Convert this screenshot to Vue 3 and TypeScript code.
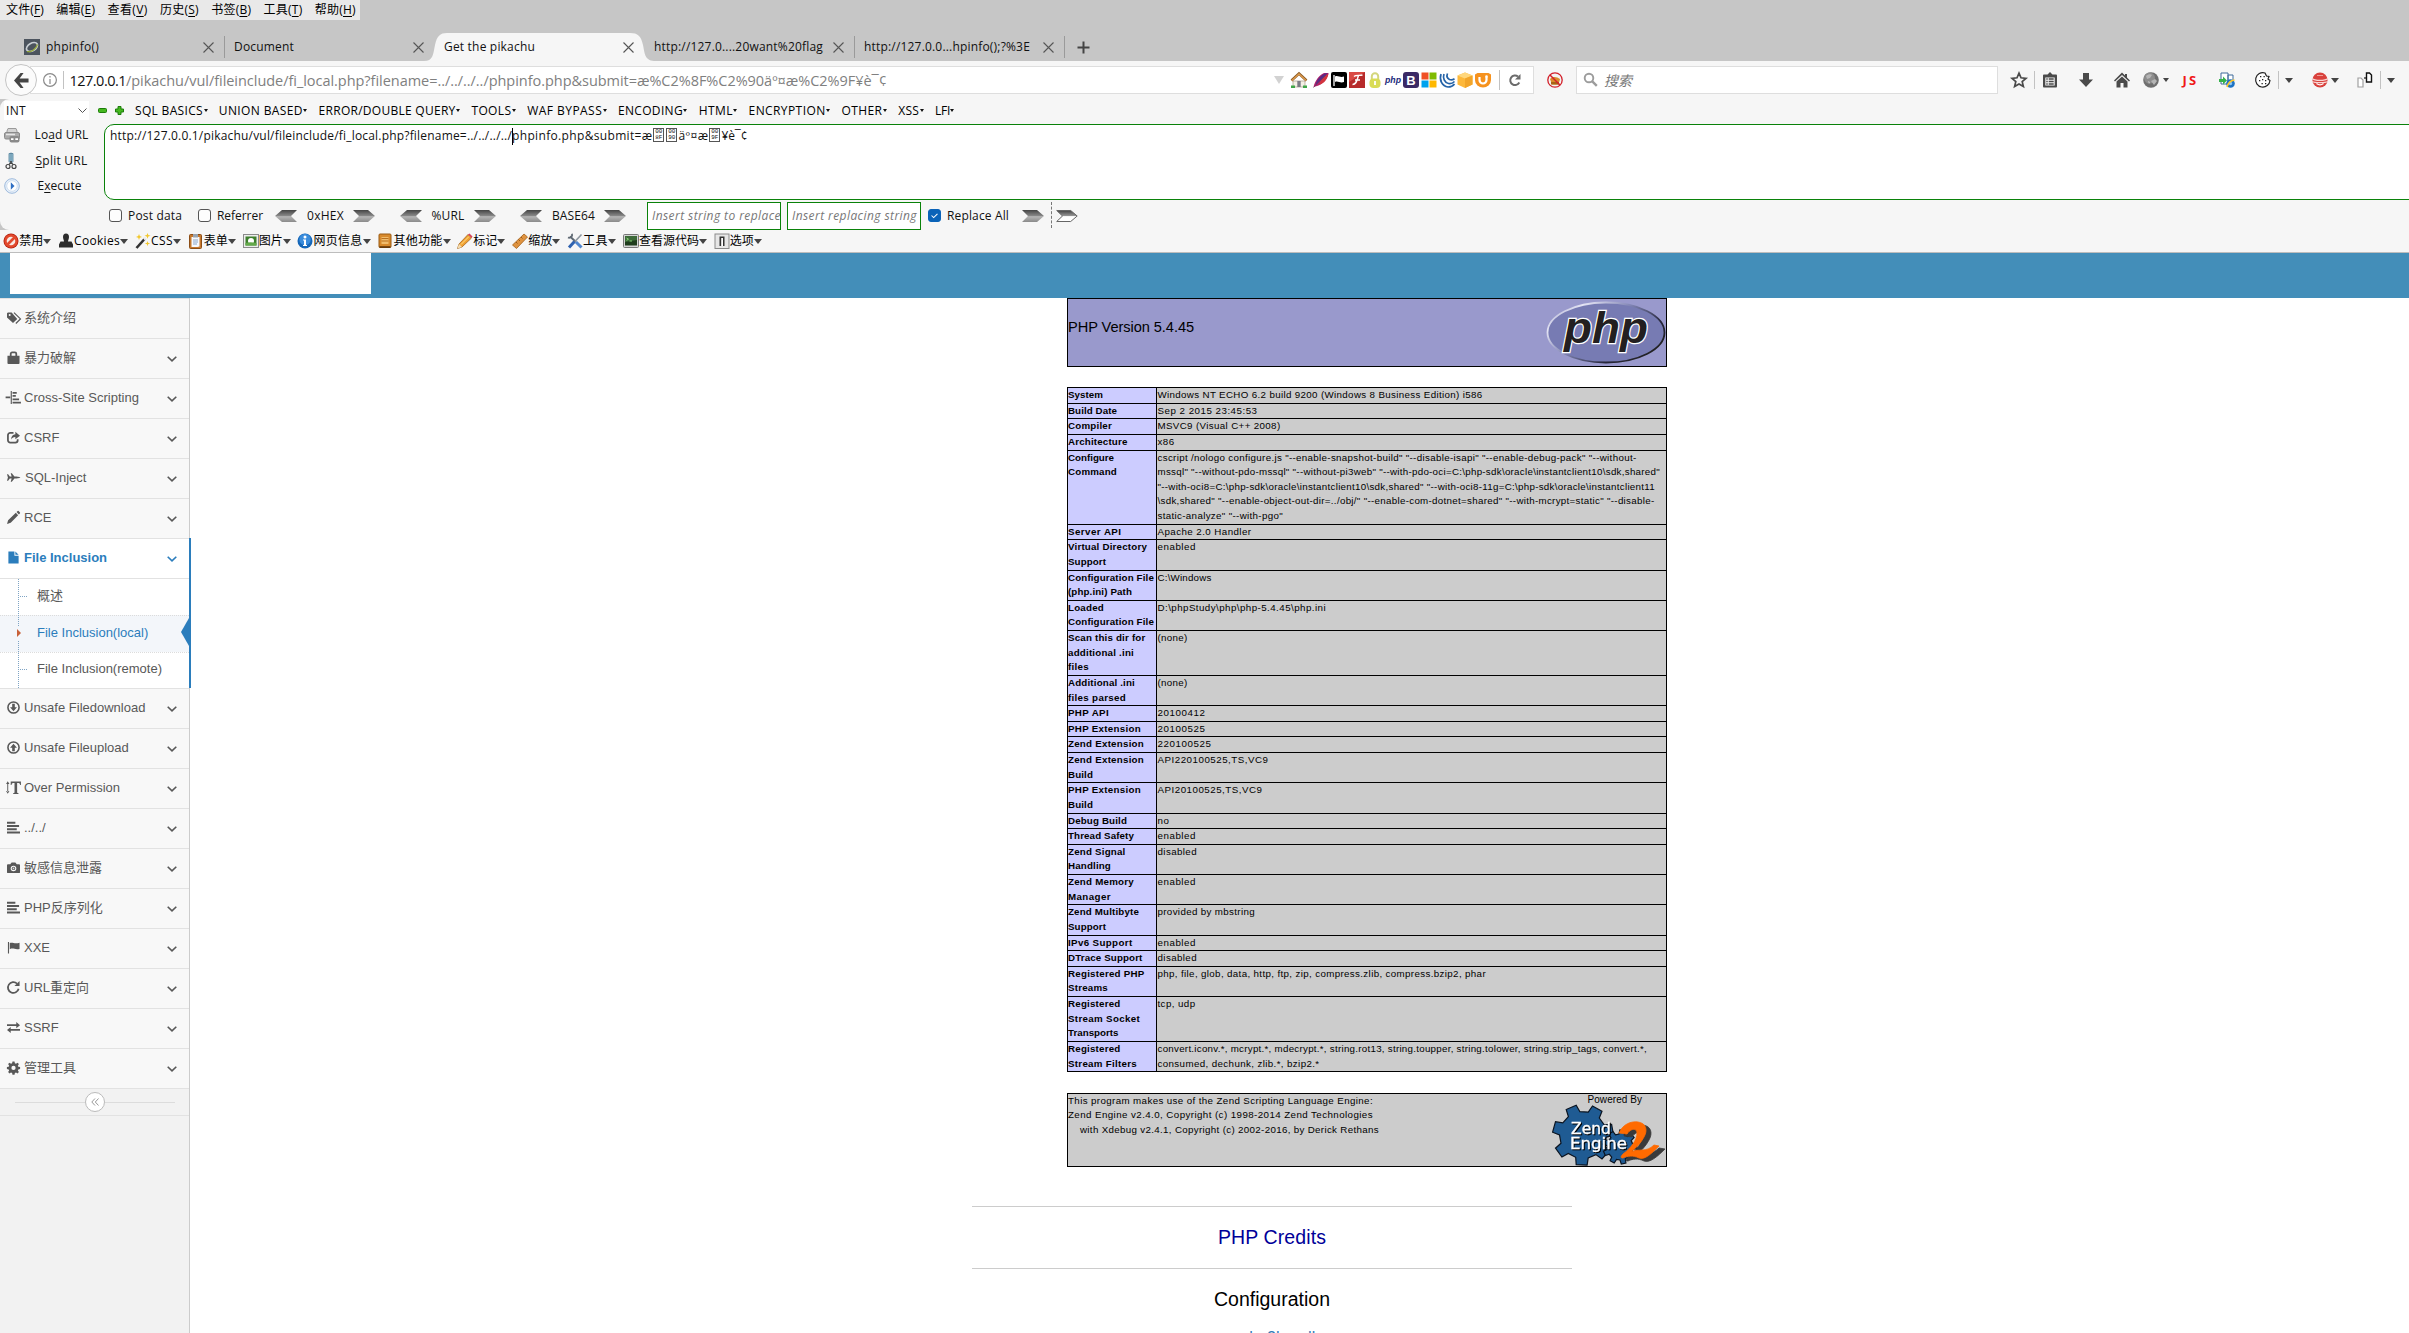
<script setup lang="ts">
import type { Directive } from 'vue'

// Tracks a run of text out to a given width in pixels.
const vFit: Directive<HTMLElement, number> = {
  mounted(el, { value }) {
    if (!value) return
    el.style.display = 'inline-block'
    el.style.whiteSpace = 'pre'
    const count = (el.textContent ?? '').length
    const natural = el.getBoundingClientRect().width
    el.style.letterSpacing = `${(value - natural) / count}px`
    el.style.width = `${value}px`
  },
}

interface Label { text: string; w: number }
interface Tool extends Label { icon: string }
interface NavItem { text: string; icon: string; active?: boolean }
interface InfoRow { label: Label[]; value: Label[] }

const t = (text: string, w = 0): Label => ({ text, w })

const menus = [
  { name: '文件', key: 'F', w: 38 }, { name: '编辑', key: 'E', w: 39 }, { name: '查看', key: 'V', w: 40 },
  { name: '历史', key: 'S', w: 39 }, { name: '书签', key: 'B', w: 40 }, { name: '工具', key: 'T', w: 39 },
  { name: '帮助', key: 'H', w: 41 },
]

const sqlMenus: Label[] = [
  t('SQL BASICS', 68), t('UNION BASED', 84), t('ERROR/DOUBLE QUERY', 137), t('TOOLS', 40), t('WAF BYPASS', 75),
  t('ENCODING', 65), t('HTML', 34), t('ENCRYPTION', 77), t('OTHER', 41), t('XSS', 21), t('LFI', 15),
]

const devTools: Tool[] = [
  { icon: 'ban', text: '禁用', w: 24 }, { icon: 'stamp', text: 'Cookies', w: 46 }, { icon: 'wand', text: 'CSS', w: 22 },
  { icon: 'form', text: '表单', w: 24 }, { icon: 'image', text: '图片', w: 24 }, { icon: 'info', text: '网页信息', w: 49 },
  { icon: 'book', text: '其他功能', w: 49 }, { icon: 'pencil', text: '标记', w: 24 }, { icon: 'ruler', text: '缩放', w: 24 },
  { icon: 'wrench', text: '工具', w: 25 }, { icon: 'term', text: '查看源代码', w: 60 }, { icon: 'switch', text: '选项', w: 24 },
]

const urlIcons = ['house', 'feather', 'flag', 'flash', 'lock', 'php', 'boot', 'win', 'jq', 'cube', 'ub']

const navTop: NavItem[] = [
  { text: '系统介绍', icon: 'tags' }, { text: '暴力破解', icon: 'bag' }, { text: 'Cross-Site Scripting', icon: 'alignv' },
  { text: 'CSRF', icon: 'share' }, { text: 'SQL-Inject', icon: 'plane' }, { text: 'RCE', icon: 'pen' },
  { text: 'File Inclusion', icon: 'file', active: true },
]
const subNav = ['概述', 'File Inclusion(local)', 'File Inclusion(remote)']
const navBottom: NavItem[] = [
  { text: 'Unsafe Filedownload', icon: 'down' }, { text: 'Unsafe Fileupload', icon: 'up' },
  { text: 'Over Permission', icon: 'textv' }, { text: '../../', icon: 'align' }, { text: '敏感信息泄露', icon: 'camera' },
  { text: 'PHP反序列化', icon: 'align' }, { text: 'XXE', icon: 'nflag' }, { text: 'URL重定向', icon: 'repeat' },
  { text: 'SSRF', icon: 'transfer' }, { text: '管理工具', icon: 'cog' },
]

const rows: InfoRow[] = [
  { label: [t('System', 35)], value: [t('Windows NT ECHO 6.2 build 9200 (Windows 8 Business Edition) i586', 325)] },
  { label: [t('Build Date', 49)], value: [t('Sep 2 2015 23:45:53', 100)] },
  { label: [t('Compiler', 44)], value: [t('MSVC9 (Visual C++ 2008)', 123)] },
  { label: [t('Architecture', 59.5)], value: [t('x86', 17)] },
  {
    label: [t('Configure', 46), t('Command', 49)],
    value: [
      t('cscript /nologo configure.js "--enable-snapshot-build" "--disable-isapi" "--enable-debug-pack" "--without-', 479),
      t('mssql" "--without-pdo-mssql" "--without-pi3web" "--with-pdo-oci=C:\\php-sdk\\oracle\\instantclient10\\sdk,shared"', 502.5),
      t('"--with-oci8=C:\\php-sdk\\oracle\\instantclient10\\sdk,shared" "--with-oci8-11g=C:\\php-sdk\\oracle\\instantclient11', 497.5),
      t('\\sdk,shared" "--enable-object-out-dir=../obj/" "--enable-com-dotnet=shared" "--with-mcrypt=static" "--disable-', 497),
      t('static-analyze" "--with-pgo"', 125.5),
    ],
  },
  { label: [t('Server API', 53.5)], value: [t('Apache 2.0 Handler', 94)] },
  { label: [t('Virtual Directory', 79), t('Support', 38)], value: [t('enabled', 38.5)] },
  { label: [t('Configuration File', 86), t('(php.ini) Path', 64)], value: [t('C:\\Windows', 54)] },
  { label: [t('Loaded', 36), t('Configuration File', 86)], value: [t('D:\\phpStudy\\php\\php-5.4.45\\php.ini', 168.5)] },
  { label: [t('Scan this dir for', 77.5), t('additional .ini', 66), t('files', 21)], value: [t('(none)', 30)] },
  { label: [t('Additional .ini', 67), t('files parsed', 58)], value: [t('(none)', 30)] },
  { label: [t('PHP API', 41)], value: [t('20100412', 48)] },
  { label: [t('PHP Extension', 73)], value: [t('20100525', 48)] },
  { label: [t('Zend Extension', 76)], value: [t('220100525', 54)] },
  { label: [t('Zend Extension', 76), t('Build', 25)], value: [t('API220100525,TS,VC9', 111)] },
  { label: [t('PHP Extension', 73), t('Build', 25)], value: [t('API20100525,TS,VC9', 105)] },
  { label: [t('Debug Build', 59)], value: [t('no', 12)] },
  { label: [t('Thread Safety', 66)], value: [t('enabled', 38.5)] },
  { label: [t('Zend Signal', 57.5), t('Handling', 43)], value: [t('disabled', 39.5)] },
  { label: [t('Zend Memory', 66), t('Manager', 43)], value: [t('enabled', 38.5)] },
  { label: [t('Zend Multibyte', 71), t('Support', 38)], value: [t('provided by mbstring', 97.5)] },
  { label: [t('IPv6 Support', 64.5)], value: [t('enabled', 38.5)] },
  { label: [t('DTrace Support', 74.5)], value: [t('disabled', 39.5)] },
  { label: [t('Registered PHP', 76.5), t('Streams', 40)], value: [t('php, file, glob, data, http, ftp, zip, compress.zlib, compress.bzip2, phar', 328.5)] },
  { label: [t('Registered', 52.5), t('Stream Socket', 72), t('Transports', 50.5)], value: [t('tcp, udp', 38)] },
  {
    label: [t('Registered', 52.5), t('Stream Filters', 69)],
    value: [
      t('convert.iconv.*, mcrypt.*, mdecrypt.*, string.rot13, string.toupper, string.tolower, string.strip_tags, convert.*,', 489.5),
      t('consumed, dechunk, zlib.*, bzip2.*', 162),
    ],
  },
]

// 16×16 coloured icons of the browser chrome.
const icons: Record<string, string> = {
  house: '<path d="M2 9h12v6H2z" fill="#f4f0e6" stroke="#9b8b74" stroke-width=".6"/><path d="M.5 8.500 8 1.500l7.500 7" fill="none" stroke="#8a5a26" stroke-width="2.6"/><path d="M.8 8.500 8 2l7.200 6.500" fill="none" stroke="#dd9a4c" stroke-width="1.300"/><path d="M6.300 9h3.400v6H6.300z" fill="#7b7b86"/><path d="M0 13.500h4V16H0zM12 13.500h4V16h-4z" fill="#3ea548"/>',
  feather: '<path d="M.5 15C2 9 6 3 11 1h4.500C15 6 10 12.500 4 14z" fill="#b3206b"/><path d="M3 11C5 6 9 2.500 12 1.500l3-.5C12 4 8 8 2.500 13z" fill="#5b2a85"/><path d="M7 10c2-3 5-6 8.500-8.500C14.500 7 11.500 11 6.500 12.800z" fill="#d2343e"/><path d="M.5 15.500 13 3" stroke="#6b3a66" stroke-width=".8"/>',
  flag: '<rect width="16" height="16" rx="2" fill="#000"/><path d="M3 3v11" stroke="#fff" stroke-width="1.300"/><path d="M4 4.500c3-1.500 5 1.500 9 0v5.500c-4 1.500-6-1.500-9 0z" fill="#fff"/>',
  flash: '<rect width="16" height="16" fill="#b72b2b"/><path d="M0 0h16L0 10z" fill="#d94a44"/><path d="M5 4.500c2-2 5-.5 8.500-1.500M9.500 3.500C8 8 7.500 12.500 3.500 12.500M6 8h5" stroke="#fff" stroke-width="1.400" fill="none"/>',
  lock: '<path d="M4.800 8V4.500a3.200 3.200 0 0 1 6.400 0V8" fill="none" stroke="#d3d67c" stroke-width="2"/><rect x="2.500" y="6.500" width="11" height="9.500" rx="4" fill="#d9dc56"/><path d="M8 9v4" stroke="#fff" stroke-width="1.800"/>',
  php: '<text x="8" y="10.500" text-anchor="middle" font-family="Liberation Sans, sans-serif" font-weight="bold" font-style="italic" font-size="9" textLength="16" lengthAdjust="spacingAndGlyphs" fill="#1b2a7b">php</text>',
  boot: '<rect width="16" height="16" rx="3" fill="#3b2a66"/><text x="8" y="12.800" text-anchor="middle" font-family="Liberation Sans, sans-serif" font-weight="bold" font-size="13" fill="#fff">B</text>',
  win: '<path d="M.5.500h7v7h-7z" fill="#f05125"/><path d="M8.500.500h7v7h-7z" fill="#7fbb00"/><path d="M.5 8.500h7v7h-7z" fill="#00a3ee"/><path d="M8.500 8.500h7v7h-7z" fill="#ffb800"/>',
  jq: '<path d="M2 2c-2 6 1 12 7 13 3 0 5-1 6.500-3M5 2C3.500 6 5.500 10.500 9.500 11.500c2.500.5 4.500-.5 6-2M8.500 1.500C7.500 4 8.500 6.500 10.500 7.500c2 .8 3.500.3 5-.7" fill="none" stroke="#2563a8" stroke-width="1.700"/>',
  cube: '<path d="m8 .5 7.500 3v9L8 16 .5 12.500v-9z" fill="#fdb83b"/><path d="m.5 3.500 7.500 3 7.500-3L8 .5z" fill="#ffd77c"/><path d="M8 6.500V16l7.500-3.500v-9z" fill="#f2a52a"/>',
  ub: '<path d="M0 2.500 2.500 1h11L16 2.500V8a8 7.500 0 0 1-16 0z" fill="#f6921e"/><path d="M4.500 5v3a3.500 3.500 0 0 0 7 0V5" fill="none" stroke="#fff" stroke-width="2.200"/><circle cx="11.500" cy="4.500" r="1.300" fill="#fff"/>',
  reload: '<path d="M12.300 10.500A4.800 4.800 0 1 1 11 4.500" fill="none" stroke="#6b6b6b" stroke-width="2"/><path d="M13.500 2V7.500H8z" fill="#6b6b6b"/>',
  noscript: '<circle cx="8" cy="8" r="7" fill="#f3f3f3"/><path d="M3 7c3-3 7-2 10 0l-1.500 5.500H5z" fill="#d98b2b"/><path d="M4 10h8v2.500H4z" fill="#a86414"/><circle cx="8" cy="8" r="7.200" fill="none" stroke="#d3202a" stroke-width="1.300"/><path d="m3 3 10 10" stroke="#d3202a" stroke-width="1.500"/>',
  search: '<circle cx="6" cy="6" r="4.300" fill="none" stroke="#9c9c9c" stroke-width="1.900"/><path d="m9.300 9.300 4.500 4.500" stroke="#9c9c9c" stroke-width="2.400"/>',
  star: '<path d="m8 1.200 2 4.600 5 .5-3.800 3.300 1.200 5L8 12l-4.400 2.600 1.200-5L1 6.300l5-.5z" fill="none" stroke="#4a4a4a" stroke-width="1.700"/>',
  clip: '<path d="M1 3.500C1 3 1.500 2.500 2 2.500h3.500L8 0l2.500 2.500H14c.500 0 1 .500 1 1V14.500c0 .500-.5 1-1 1H2c-.5 0-1-.5-1-1z" fill="#4a4a4a"/><path d="M3.300 5.500h9.400v8H3.300z" fill="#f6f6f6"/><path d="M4.300 7h1.400M6.700 7h5M4.300 9.500h1.400M6.700 9.500h5M4.300 12h1.400M6.700 12h5" stroke="#4a4a4a" stroke-width="1.300"/>',
  dl: '<path d="M5 1h6v6.500h4L8 15 1 7.500h4z" fill="#4a4a4a"/>',
  home: '<path d="M8 .5 0 8.500l1 1L8 3l7 6.500 1-1L13 5.500V2h-2v1.500z" fill="#4a4a4a"/><path d="m8 4.500 5.500 5V15.500H9.500V11h-3v4.500h-4V9.500z" fill="#4a4a4a"/>',
  globe: '<circle cx="8" cy="8" r="7.800" fill="#6f6f6f"/><circle cx="6.500" cy="6" r="5.500" fill="#8d8d8d"/><path d="M3 4c2-2 5-2 6-1L7 6 4 7zM8 9l4-2 2 2-3 4z" fill="#b5b5b5"/><path d="m5 9 2 1-1 2z" fill="#c9c9c9"/>',
  ie: '<path d="M2 1h7v11H2zM9 3h5v6H9z" fill="#fff" stroke="#3e6b9a"/><path d="M0 7h4V4.500l4 4L4 12.500V10H0z" fill="#35b24c"/><circle cx="11.500" cy="11.500" r="4.300" fill="#1d72c4"/><circle cx="11.500" cy="11.500" r="1.700" fill="#8cc4f0"/><path d="M8 15c1-4 4-6.500 7.500-7" stroke="#ffc928" stroke-width="1.600" fill="none"/>',
  cookie: '<path d="M10 1a7.200 7.200 0 1 0 5 7.500l-2-1.500 1-2.500-2.500-.5z" fill="#fff" stroke="#222" stroke-width="1.200"/><path d="M5 4h1.300v1.300H5zM8.500 4h1.300v1.300H8.500zM4 8h1.300v1.300H4zM7 7h1.300v1.300H7zM10 8h1.300v1.300H10zM6.500 11h1.300v1.300H6.500zM10 11h1.300v1.300H10z" fill="#222"/>',
  red: '<circle cx="8" cy="8" r="7.600" fill="#d9413c"/><path d="M0 6.500c3 2.500 13 2.500 16 0M0 9.500c3 1.500 13 1.500 16 0" stroke="#f7d5d2" stroke-width="1.200" fill="none"/><path d="M4.500 11.500c2 1.500 5 1.500 7 0" stroke="#fff" stroke-width="1.300" fill="none"/><path d="M5 3.500h6" stroke="#ef9d97"/>',
  pages: '<path d="M1 6h3l2 2v7H1z" fill="#fff" stroke="#a0a0a0" stroke-width="1.200"/><path d="M9.500 1h3l2 2v7h-5z" fill="#fff" stroke="#111" stroke-width="1.400"/><path d="M7 6h2.500" stroke="#111" stroke-width="1.200"/>',
  fav: '<rect width="16" height="16" fill="#4c545e"/><ellipse cx="8" cy="8" rx="6" ry="3.800" transform="rotate(-30 8 8)" fill="none" stroke="#c9cfd4" stroke-width="1.600"/><path d="M3 12.500c4 1 9-2 10.500-7" stroke="#93a637" fill="none" stroke-width="1.200"/>',
  ban: '<circle cx="8" cy="8" r="7.500" fill="#b3200f"/><circle cx="8" cy="8" r="6.700" fill="#e2492d"/><circle cx="8" cy="8" r="4.300" fill="#f7e9e4"/><path d="m4 12 8-8" stroke="#e2492d" stroke-width="2.600"/>',
  stamp: '<path d="M5 4a3 3.500 0 0 1 6 0c0 2-1 3-1 4.500h3.500L15 11.500v3H1v-3l1.500-3H6C6 7 5 6 5 4z" fill="#2c2c2c"/>',
  wand: '<path d="M1.500 15 10 5.500" stroke="#333" stroke-width="2.600"/><path d="m9 6.500 2-2" stroke="#eee" stroke-width="2.600"/><path d="m4 1 .8 2L7 4l-2.200.8L4 7l-.8-2.200L1 4l2.200-1zM12.500 0l.8 2 2.200.8-2.200.8-.8 2.200-.8-2.200L9.500 2.800l2.200-.8zM12.500 8l.6 1.800 2 .7-2 .7-.6 2-.6-2-2-.7 2-.7z" fill="#f2c72c"/>',
  form: '<rect x="1.500" y="1.500" width="12" height="14" rx="1" fill="#c5772c" stroke="#8c4d15"/><path d="M3.500 4h8v9.500l-2 .5h-6z" fill="#f7f9fc"/><path d="M5 1h5v3.500H5z" fill="#9aa4b0"/><path d="M5 7h5M5 9h5M5 11h4" stroke="#8aa5c8"/>',
  image: '<rect x=".5" y="1.500" width="15" height="13" fill="#ededed" stroke="#8a8a8a"/><path d="M2.500 3.500h11v9h-11z" fill="#3d7f2d"/><circle cx="8" cy="8" r="3" fill="#fff"/><path d="M2.500 10c3-1 7-1 11 0v2.500h-11z" fill="#63a94a"/>',
  info: '<circle cx="8" cy="8" r="7.500" fill="#1466b8"/><circle cx="8" cy="6.500" r="5.700" fill="#3a8cdc"/><circle cx="8" cy="4" r="1.500" fill="#fff"/><path d="M6 6.500h3V12h1v1H6v-1h1V7.500H6z" fill="#fff"/>',
  book: '<rect x="2" y="1" width="12" height="13.500" rx="1" fill="#d88a2c" stroke="#9a5a12"/><path d="M4.500 4h7v7h-7z" fill="#f0bc6c"/><path d="M4.500 5.500h7M4.500 8h7" stroke="#b96f1d"/><path d="M2.500 14h11" stroke="#5a3208" stroke-width="1.500"/>',
  pencil: '<path d="m2 11 9-9.500L14.500 5 5 14l-4.500 1.500z" fill="#f0a132" stroke="#9a5a12" stroke-width=".7"/><path d="m11 1.500 1.500-1L15.500 3.500l-1 1.500z" fill="#d8405a"/><path d="m2 11 3 3-4.500 1.500z" fill="#f5ddb2"/><path d="m4 11.500 8-8" stroke="#ffe08a"/>',
  ruler: '<path d="M.5 12 12 1l3.500 3L4.500 15.500z" fill="#df9340" stroke="#a25f18" stroke-width=".8"/><path d="m4 9 1.500 1.500M6.500 6.500 8 8M9 4l1.500 1.500" stroke="#8a4d10" stroke-width=".8"/>',
  wrench: '<path d="M3 3.500 9 9" stroke="#5f6973" stroke-width="2"/><path d="M1 4.500A3 3 0 0 0 5 .8" stroke="#5f6973" stroke-width="1.800" fill="none"/><path d="M14.500 1.500 8 8.500" stroke="#8c959e" stroke-width="1.600"/><path d="M7.500 8.500 2 14.500" stroke="#2f62b0" stroke-width="3"/><path d="m9 9 5.500 5.500" stroke="#4f86cf" stroke-width="3"/>',
  term: '<rect x=".5" y="1.500" width="15" height="13" rx="1" fill="#d5d5d5" stroke="#777"/><path d="M2 3h12v9.500H2z" fill="#1f3d1d"/><path d="M2 3h12v4L2 9z" fill="#3d6a39"/><path d="m3.500 5 2 1.200-2 1.200M6.500 8H9" stroke="#8fe07a" fill="none" stroke-width=".9"/>',
  switch: '<rect x="1" y="1" width="14" height="14.500" fill="#e6e6e6" stroke="#8a8a8a"/><path d="M5.500 3.500h5v9.500h-5z" fill="#333"/><path d="M7.200 5h1.800v8H7.200z" fill="#fff"/>',
  load: '<path d="M3 4 4 1.500h8l1 2.500v3H3z" fill="#d4d4d4" stroke="#9a9a9a"/><rect x=".5" y="5.500" width="15" height="6.500" rx="1.500" fill="#ababab" stroke="#8a8a8a"/><path d="M2 7.500h9" stroke="#e6e6e6" stroke-width="1.500"/><rect x="5.500" y="9" width="10" height="6.500" rx="2" fill="#8a8a8a"/><path d="M7 12.200h2.500m1.800 0H14" stroke="#fff" stroke-width="1.700"/>',
  cut: '<path d="M6 1v8l2 2 2-2V1zM8 0v10" fill="#9cc3d8" stroke="#4f7e98" stroke-width=".8"/><circle cx="5" cy="14" r="2" fill="none" stroke="#444" stroke-width="1.200"/><circle cx="11" cy="14" r="2" fill="none" stroke="#444" stroke-width="1.200"/><path d="m6 12 3-3M10 12 7 9" stroke="#444" stroke-width="1.200"/>',
  play: '<circle cx="8" cy="8" r="7.300" fill="#e9f1fa" stroke="#9db9dc"/><circle cx="8" cy="8" r="5.300" fill="#fff" stroke="#cfdff1"/><path d="M6.800 4.300 10.500 8l-3.700 3.700z" fill="#2f6fc4"/>',
}

// 14×14 single-colour icons of the side menu.
const glyphs: Record<string, string> = {
  tags: '<path d="M0 2.500V7l6.500 6 4.500-4.500L5 1.500H1z"/><circle cx="2.900" cy="4.300" r="1.100" fill="#f8f8f8"/><path d="M7.500 1.700l7 6.800-5 5" fill="none" stroke="currentColor" stroke-width="1.300"/>',
  bag: '<path d="M4 6V3a1.500 1.500 0 0 1 1.500-1.500h3A1.500 1.500 0 0 1 10 3v3" fill="none" stroke="currentColor" stroke-width="1.900"/><path d="M.5 5h13v8q0 1-1 1h-11q-1 0-1-1z"/>',
  alignv: '<path d="M-1.500 6h5v1.700h-5zM4 0h1.200v14H4zM6 1h4.500v2H6zM6 4.300h3.500v2H6zM6 8h7v2H6zM6 11.500h9v2H6z"/>',
  share: '<path d="M7 2H3.500A2.500 2.500 0 0 0 1 4.500v5.500a2.500 2.500 0 0 0 2.500 2.500H9a2.500 2.500 0 0 0 2.500-2.500V9" fill="none" stroke="currentColor" stroke-width="1.900"/><path d="M9 .8 14 5 9 9V6.600C6.800 6.500 5.500 7.500 4.500 9.200 4.500 5.500 6.300 3.700 9 3.500z"/>',
  plane: '<path d="M0 3.500h1.200L3 6h2L4 2.500h1.200L8 6c3 0 5 .2 6.500 1C13 7.800 11 8 8 8l-2.800 3.500H4L5 8H3l-1.800 2.500H0L1 7z"/>',
  pen: '<path d="m0 14 1.200-4L9.500 2 12 4.500 4 12.700zM10.300 1.200 11.500 0q.5-.3 1 0L14 1.500q.3.500 0 1L12.800 3.700z"/>',
  file: '<path d="M1.500.5H8v4.500h4.500v8.500h-11zM9 .5 12.500 4H9z"/>',
  down: '<circle cx="7" cy="7" r="6" fill="none" stroke="currentColor" stroke-width="1.700"/><path d="M5.600 3h2.800v3.800h2.300L7 11 3.300 6.800h2.300z"/>',
  up: '<circle cx="7" cy="7" r="6" fill="none" stroke="currentColor" stroke-width="1.700"/><path d="M5.600 11h2.800V7.200h2.300L7 3 3.300 7.200h2.300z"/>',
  textv: '<path d="M4 .5h11v3.800h-.8Q14 2.300 12.500 2.200h-1.600V12q0 1 1.400 1v.9H6.700V13q1.400 0 1.400-1V2.200H6.500Q5 2.300 4.800 4.300H4z"/><path d="M.3 2.500h1v9h-1zM-1 3.300.8.300l1.800 3zM-1 10.700l1.800 3 1.800-3z"/>',
  align: '<path d="M0 .8h9v2.200H0zM0 4.300h13v2.200H0zM0 7.800h10.500V10H0zM0 11.300h14v2.200H0z"/>',
  camera: '<path d="M0 4.500q0-1 1-1h2.500L5 1.500h4l1.500 2H13q1 0 1 1V12q0 1-1 1H1q-1 0-1-1z"/><circle cx="7" cy="8" r="3" fill="#f8f8f8"/><circle cx="7" cy="8" r="1.800"/><path d="M7 7v2M6 8h2" stroke="#f8f8f8" stroke-width=".7"/>',
  nflag: '<path d="M1 1h1.200v12.500H1zM3 2.200c3-1.500 4.500 1.500 10.500-.2v6.500C9 10 7 7 3 8.800z"/>',
  repeat: '<path d="M12.500 8.300A5.800 5.800 0 1 1 10.800 2.800" fill="none" stroke="currentColor" stroke-width="1.900"/><path d="M13.500 0v5.500H8z"/>',
  transfer: '<path d="M0 3.500h10V1.200L14 4.500l-4 3.200V5.400H0zM14 8.700H4V6.500L0 9.700 4 13v-2.400h10z"/>',
  cog: '<path d="M5.900.5h2.200l.4 1.900 1.200.5 1.600-1.100 1.500 1.500-1.100 1.700.5 1.100 1.900.4v2.200l-1.900.4-.5 1.100 1.100 1.700-1.500 1.500-1.600-1.100-1.200.5-.4 1.900H5.900l-.4-1.900-1.200-.5-1.600 1.100-1.500-1.500 1.100-1.700-.5-1.100L-.1 8.700V6.500l1.900-.4.500-1.100-1.100-1.700 1.500-1.500 1.600 1.100 1.200-.5z"/><circle cx="7" cy="7.500" r="2.300" fill="#f8f8f8"/>',
}

// Outline of a gear with square teeth.
function gear(cx: number, cy: number, outer: number, inner: number, teeth: number): string {
  const points: string[] = []
  for (let i = 0; i < teeth; i++) {
    const step = (Math.PI * 2) / teeth
    const corners: [number, number][] = [[0, inner], [0.1, outer], [0.5, outer], [0.6, inner]]
    for (const [f, r] of corners) {
      const a = (i + f) * step + 0.45
      points.push(`${(cx + Math.cos(a) * r).toFixed(1)},${(cy + Math.sin(a) * r).toFixed(1)}`)
    }
  }
  return points.join(' ')
}
const bigGear = gear(32, 41, 30.5, 23.5, 7)
const smallGear = gear(69, 53, 17, 13, 9)
</script>

<template>
  <div class="page">
    <header class="titlebar">
      <div class="menubar">
        <span v-for="m in menus" :key="m.key" v-fit="m.w">{{ m.name }}(<u>{{ m.key }}</u>)</span>
      </div>
      <div class="tabs">
        <div class="tab first">
          <svg class="fav" viewBox="0 0 16 16" v-html="icons.fav" />
          <span v-fit="53">phpinfo()</span>
          <svg class="close" viewBox="0 0 11 11"><path d="M.5.5l10 10M10.500.5l-10 10" /></svg>
        </div>
        <div class="tab split">
          <span v-fit="60">Document</span>
          <svg class="close" viewBox="0 0 11 11"><path d="M.5.5l10 10M10.500.5l-10 10" /></svg>
        </div>
        <div class="tab active">
          <svg class="shape" viewBox="0 0 232 28"><path d="M0 28C9 28 9 22 11 12 13 3 16 0 23 0H206C214 0 217 3 219 12 221 22 221 28 232 28Z" /></svg>
          <span v-fit="91">Get the pikachu</span>
          <svg class="close" viewBox="0 0 11 11"><path d="M.5.5l10 10M10.500.5l-10 10" /></svg>
        </div>
        <div class="tab">
          <span v-fit="169">http://127.0....20want%20flag</span>
          <svg class="close" viewBox="0 0 11 11"><path d="M.5.5l10 10M10.500.5l-10 10" /></svg>
        </div>
        <div class="tab split">
          <span v-fit="166">http://127.0.0...hpinfo();?%3E</span>
          <svg class="close" viewBox="0 0 11 11"><path d="M.5.5l10 10M10.500.5l-10 10" /></svg>
        </div>
        <div class="tab split plus">
          <svg viewBox="0 0 13 13"><path d="M6.500.5v12M.5 6.500h12" /></svg>
        </div>
      </div>
    </header>

    <div class="navbar">
      <div class="back"><svg viewBox="0 0 16 16"><path d="M7 0 0 8l7 8h3.200L6 10.200h9.500V5.800H6L10.200 0z" /></svg></div>
      <div class="urlbar">
        <svg class="about" viewBox="0 0 14 14"><circle cx="7" cy="7" r="6.400" /><path d="M7 6v5M7 3v1.500" /></svg>
        <i class="rule" />
        <span v-fit="56.500" class="host">127.0.0.1</span>
        <span v-fit="761" class="path">/pikachu/vul/fileinclude/fi_local.php?filename=../../../../phpinfo.php&amp;submit=æ%C2%8F%C2%90äº¤æ%C2%9F¥è¯¢</span>
        <i class="history" />
        <div class="addons">
          <svg v-for="i in urlIcons" :key="i" :class="i" viewBox="0 0 16 16" v-html="icons[i]" />
        </div>
        <i class="rule end" />
        <svg class="reload" viewBox="0 0 16 16" v-html="icons.reload" />
      </div>
      <svg class="noscript" viewBox="0 0 16 16" v-html="icons.noscript" />
      <div class="searchbar">
        <svg viewBox="0 0 16 16" v-html="icons.search" />
        <span>搜索</span>
      </div>
      <div class="actions">
        <svg viewBox="0 0 16 16" v-html="icons.star" />
        <i class="rule a" />
        <svg viewBox="0 0 16 16" v-html="icons.clip" />
        <svg class="wide" viewBox="0 0 16 16" v-html="icons.dl" />
        <svg class="wide" viewBox="0 0 16 16" v-html="icons.home" />
        <svg class="near" viewBox="0 0 16 16" v-html="icons.globe" />
        <i class="tri s" />
        <b v-fit="16" class="js">JS</b>
        <svg class="wide" viewBox="0 0 16 16" v-html="icons.ie" />
        <svg class="wide" viewBox="0 0 16 16" v-html="icons.cookie" />
        <i class="rule b" />
        <i class="tri c" />
        <svg class="red" viewBox="0 0 16 16" v-html="icons.red" />
        <i class="tri d" />
        <svg class="pages" viewBox="0 0 16 16" v-html="icons.pages" />
        <i class="rule b" />
        <i class="tri c" />
      </div>
    </div>

    <section class="hackbar">
      <div class="sqlrow">
        <div class="select"><span v-fit="20">INT</span><svg viewBox="0 0 9 6"><path d="m.5.500 4 4 4-4" /></svg></div>
        <svg class="minus" viewBox="0 0 9 5"><rect x=".5" y=".5" width="8" height="4" rx="1" /></svg>
        <svg class="add" viewBox="0 0 9 9"><path d="M3 .5h3V3h2.500v3H6v2.500H3V6H.5V3H3z" /></svg>
        <div class="sqlmenus">
          <div v-for="m in sqlMenus" :key="m.text"><span v-fit="m.w">{{ m.text }}</span><i /></div>
        </div>
      </div>
      <div class="mainrow">
        <div class="side">
          <div><svg viewBox="0 0 16 16" v-html="icons.load" /><p><span v-fit="54">Lo<u>a</u>d URL</span></p></div>
          <div><svg class="tall" viewBox="0 0 16 17" v-html="icons.cut" /><p><span v-fit="52"><u>S</u>plit URL</span></p></div>
          <div><svg viewBox="0 0 16 16" v-html="icons.play" /><p class="low"><span v-fit="44">E<u>x</u>ecute</span></p></div>
        </div>
        <div class="textarea">
          <span v-fit="402">http://127.0.0.1/pikachu/vul/fileinclude/fi_local.php?filename=../../../../</span><i class="caret" /><span v-fit="140.500">phpinfo.php&amp;submit=æ</span><b><s>00</s><s>8F</s></b><b><s>00</s><s>90</s></b><span v-fit="30">äº¤æ</span><b><s>00</s><s>9F</s></b><span v-fit="26">¥è¯¢</span>
        </div>
      </div>
      <div class="optrow">
        <i class="check" /><span v-fit="54" class="cap">Post data</span>
        <i class="check second" /><span v-fit="46" class="cap">Referrer</span>
        <svg class="arr l1" viewBox="0 0 22 12"><path d="M22 0H7L0 6l7 6h15l-6-6z" fill="url(#steel)" /></svg>
        <span v-fit="37">0xHEX</span>
        <svg class="arr r1" viewBox="0 0 22 12"><path d="M0 0h15l7 6-7 6H0l6-6z" fill="url(#steel)" /></svg>
        <svg class="arr l2" viewBox="0 0 22 12"><path d="M22 0H7L0 6l7 6h15l-6-6z" fill="url(#steel)" /></svg>
        <span v-fit="33">%URL</span>
        <svg class="arr r1" viewBox="0 0 22 12"><path d="M0 0h15l7 6-7 6H0l6-6z" fill="url(#steel)" /></svg>
        <svg class="arr l2" viewBox="0 0 22 12"><path d="M22 0H7L0 6l7 6h15l-6-6z" fill="url(#steel)" /></svg>
        <span v-fit="43">BASE64</span>
        <svg class="arr r1" viewBox="0 0 22 12"><path d="M0 0h15l7 6-7 6H0l6-6z" fill="url(#steel)" /></svg>
        <div class="field one"><span v-fit="129">Insert string to replace</span></div>
        <div class="field two"><span v-fit="125">Insert replacing string</span></div>
        <i class="check on"><svg viewBox="0 0 13 13"><path d="m3 6.500 2.500 2.500L10 4.500" /></svg></i>
        <span v-fit="62" class="cap">Replace All</span>
        <svg class="arr r3" viewBox="0 0 22 12"><path d="M0 0h15l7 6-7 6H0l6-6z" fill="url(#steel)" /></svg>
        <i class="dash" />
        <svg class="arr r4" viewBox="0 0 22 12">
          <defs>
            <linearGradient id="steel" x1="0" y1="0" x2="0" y2="1"><stop offset="0" stop-color="#444" /><stop offset=".5" stop-color="#8a8a8a" /><stop offset=".55" stop-color="#b5b5b5" /><stop offset="1" stop-color="#8a8a8a" /></linearGradient>
            <linearGradient id="pale" x1="0" y1="0" x2="0" y2="1"><stop offset="0" stop-color="#444" /><stop offset=".5" stop-color="#999" /><stop offset=".55" stop-color="#fff" /></linearGradient>
          </defs>
          <path d="M.7.500h14l6.500 5.500-6.500 5.500H.7L6.500 6z" fill="url(#pale)" stroke="#666" />
        </svg>
      </div>
    </section>

    <div class="devbar">
      <div v-for="d in devTools" :key="d.text"><svg viewBox="0 0 16 16" v-html="icons[d.icon]" /><span v-fit="d.w">{{ d.text }}</span><i /></div>
    </div>

    <div class="banner"><div class="blank" /></div>

    <div class="body">
      <nav class="sidebar">
        <div v-for="n in navTop" :key="n.text" class="item" :class="{ active: n.active }">
          <svg class="gl" viewBox="0 0 14 14" v-html="glyphs[n.icon]" /><span :class="{ nudge: n.icon === 'plane' }">{{ n.text }}</span>
          <svg v-if="n.icon !== 'tags'" class="chev" viewBox="0 0 10 6"><path d="m.7.700 4.300 4.200L9.300.7" /></svg>
        </div>
        <div class="subs">
          <div v-for="(s, i) in subNav" :key="s" class="sub" :class="{ current: i === 1 }"><i class="mark" /><span>{{ s }}</span></div>
        </div>
        <div v-for="n in navBottom" :key="n.text" class="item">
          <svg class="gl" viewBox="0 0 14 14" v-html="glyphs[n.icon]" /><span>{{ n.text }}</span>
          <svg class="chev" viewBox="0 0 10 6"><path d="m.7.700 4.300 4.200L9.300.7" /></svg>
        </div>
        <div class="collapse">
          <i /><div><svg viewBox="0 0 8 8"><path d="M4 .5.800 4 4 7.500M7.500.5 4.300 4l3.200 3.500" /></svg></div><i />
        </div>
      </nav>

      <main class="content">
        <div class="box head">
          <h1><span v-fit="126">PHP Version 5.4.45</span></h1>
          <svg viewBox="0 0 120 63">
            <defs>
              <linearGradient id="rim" x1="0" y1="0" x2="1" y2=".7"><stop offset="0" stop-color="#8f93bd" /><stop offset=".22" stop-color="#e4e4f4" /><stop offset=".5" stop-color="#8084b4" /><stop offset=".8" stop-color="#26263a" /><stop offset="1" stop-color="#222" /></linearGradient>
            </defs>
            <ellipse cx="60" cy="31.500" rx="58.500" ry="30" fill="#777bb3" stroke="url(#rim)" stroke-width="1.800" />
            <text x="18" y="41.500" textLength="84" lengthAdjust="spacingAndGlyphs">php</text>
          </svg>
        </div>

        <div class="table">
          <div v-for="(r, i) in rows" :key="i" class="tr">
            <div class="th"><div v-for="(l, j) in r.label" :key="j"><span v-fit="l.w">{{ l.text }}</span></div></div>
            <div class="td"><div v-for="(l, j) in r.value" :key="j"><span v-fit="l.w">{{ l.text }}</span></div></div>
          </div>
        </div>

        <div class="box zend">
          <div class="lines">
            <div><span v-fit="305">This program makes use of the Zend Scripting Language Engine:</span></div>
            <div><span v-fit="305">Zend Engine v2.4.0, Copyright (c) 1998-2014 Zend Technologies</span></div>
            <div class="in"><span v-fit="299">with Xdebug v2.4.1, Copyright (c) 2002-2016, by Derick Rethans</span></div>
          </div>
          <svg viewBox="0 0 115 72">
            <text x="36.500" y="8.700" class="by" textLength="54.500">Powered By</text>
            <polygon :points="bigGear" class="cog" />
            <polygon :points="smallGear" class="cog" />
            <text x="20" y="40" class="ze" textLength="40" lengthAdjust="spacingAndGlyphs">Zend</text>
            <text x="19" y="55" class="ze" textLength="57" lengthAdjust="spacingAndGlyphs">Engine</text>
            <g transform="translate(5 3)" class="two shade"><path d="M68 39C72 30 80 27 87 28 95 29 97 36 93 43 90 49 85 54 80 58 88 54 95 59 103 51L109 52C101 60 94 66 88 64 82 61 76 62 72 64 69 64 70 62 72 60 80 54 86 46 86 39 86 34 80 34 76 40Z" /></g>
            <path class="two" d="M68 39C72 30 80 27 87 28 95 29 97 36 93 43 90 49 85 54 80 58 88 54 95 59 103 51L108 52C100 60 94 66 88 64 82 61 76 62 72 64 69 64 70 62 72 60 80 54 86 46 86 39 86 34 80 34 76 40Z" />
          </svg>
        </div>

        <div class="after">
          <hr>
          <h2 class="credits"><span v-fit="108">PHP Credits</span></h2>
          <hr>
          <h2><span v-fit="116">Configuration</span></h2>
          <a><span v-fit="115">apache2handler</span></a>
        </div>
      </main>
    </div>
  </div>
</template>

<style>
body { margin: 0; background: #fff; overflow: hidden; }
</style>

<style scoped>
.page { width: 2409px; height: 1333px; overflow: hidden; font: 12px/16px "Open Sans", "Noto Sans CJK SC", sans-serif; color: #111; background: #fff; }
svg { display: block; flex: none; overflow: visible; width: 16px; height: 16px; }
u { text-underline-offset: 2px; text-decoration-thickness: 1px; }
span { white-space: pre; flex: none; }
i { flex: none; }

.titlebar { height: 61px; background: #c6c6c6; }
.menubar { display: flex; align-items: center; gap: 12.300px; width: 354px; height: 20px; padding-left: 6px; background: #e9e9e9; color: #000; }
.tabs { display: flex; height: 28px; margin-top: 13px; padding-left: 14px; }
.tab { display: flex; align-items: center; position: relative; width: 210px; box-sizing: border-box; padding: 0 10px; }
.tab.split::before { content: ""; position: absolute; left: 0; top: 3px; height: 22px; width: 1px; background: #9a9a9a; }
.tab span { position: relative; }
.fav { margin-right: 6px; }
.tab .close { position: relative; margin-left: auto; width: 11px; height: 11px; stroke: #555; stroke-width: 1.1; fill: none; }
.tab.plus { padding-left: 13px; width: 40px; }
.tab.plus svg { width: 13px; height: 13px; stroke: #444; stroke-width: 2; }
.shape { position: absolute; left: -10px; top: 0; width: 232px; height: 28px; fill: #f6f6f6; }

.navbar { display: flex; align-items: center; height: 38px; background: #f6f6f6; }
.back { position: relative; z-index: 1; display: flex; align-items: center; justify-content: center; width: 30px; height: 30px; margin-left: 5px; border: 1px solid #c4c4c4; border-radius: 50%; background: #fbfbfb; box-sizing: content-box; }
.back svg { width: 15px; height: 15px; fill: #444; }
.urlbar { display: flex; align-items: center; box-sizing: border-box; width: 1504px; height: 28px; margin-left: -7px; padding-left: 12px; border: 1px solid #dedede; background: #fff; }
.about { width: 14px; height: 14px; fill: none; stroke: #8a8a8a; stroke-width: 1.2; }
.rule { width: 1px; height: 18px; background: #c2c2c2; }
.about + .rule { margin: 0 5.500px 0 6px; }
.host, .path { font-size: 14.5px; line-height: 20px; padding-top: 1px; color: #111; }
.path { color: #808080; }
.history { margin-left: 387px; border: 5px solid transparent; border-top: 8px solid #d2d2d2; border-bottom: 0; }
.addons { display: flex; gap: 2px; margin-left: 7px; }
.addons .feather { margin-left: 4px; }
.rule.end { margin: 0 7px 0 8px; height: 20px; }
.noscript { margin-left: 13px; }
.searchbar { display: flex; align-items: center; gap: 5px; box-sizing: border-box; width: 422px; height: 28px; margin-left: 13px; padding-left: 6px; border: 1px solid #dedede; background: #fff; }
.searchbar span { font: italic 14px/20px "Noto Sans CJK SC", sans-serif; color: #777; }
.actions { display: flex; align-items: center; margin-left: 13px; }
.actions .a { margin: 0 7px; }
.actions .wide { margin-left: 20px; }
.actions .near { margin-left: 13px; }
.tri { border: 4px solid transparent; border-top: 5px solid #444; border-bottom: 0; }
.tri.s { margin-left: 4px; border-width: 4px 3px 0; }
.js { margin-left: 13.500px; font: bold 13px/16px "Noto Sans", sans-serif; color: #f01818; }
.actions .b { margin-left: 7px; }
.tri.c { margin-left: 6px; }
.red { margin-left: 19px; }
.tri.d { margin-left: 3px; }
.pages { margin-left: 18px; }

.hackbar { position: relative; height: 131px; background: #f6f6f6; border-radius: 9px 0 0 9px; box-shadow: -9px 0 0 #c6c6c6; overflow: hidden; }
.sqlrow { display: flex; align-items: center; height: 23px; }
.select { display: flex; align-items: center; justify-content: space-between; box-sizing: border-box; width: 85px; height: 19px; margin-left: 4px; padding: 0 2px; background: #fff; }
.select svg { width: 9px; height: 6px; fill: none; stroke: #555; }
.minus { width: 9px; height: 5px; margin-left: 9px; fill: #45b81f; stroke: #1c7c0a; }
.add { width: 9px; height: 9px; margin-left: 8px; fill: #45b81f; stroke: #1c7c0a; }
.sqlmenus { display: flex; gap: 11.300px; margin-left: 11px; color: #000; }
.sqlmenus div { display: flex; align-items: center; }
.sqlmenus i { margin-left: .5px; border: 2.5px solid transparent; border-top: 3px solid #111; border-bottom: 0; }
.mainrow { display: flex; height: 76px; margin-top: 2px; }
.side { width: 104px; flex: none; margin-top: -1.500px; }
.side div { display: flex; align-items: center; height: 25.500px; padding-left: 4px; }
.side svg.tall { height: 18px; margin-left: -1px; margin-right: 1px; }
.side p { flex: 1; margin: 0; padding-right: 1px; text-align: center; }
.side .low { padding-right: 5px; }
.textarea { display: flex; align-items: flex-start; flex: 1; box-sizing: border-box; height: 76px; margin-right: -12px; padding: 3px 5px; border: 1px solid #0a820a; border-radius: 10px; background: #fff; color: #111; }
.caret { width: 1px; height: 17px; margin-right: -1px; background: #000; }
.textarea b { flex: none; display: flex; flex-direction: column; align-items: center; justify-content: center; box-sizing: border-box; width: 11px; height: 14px; margin: 0 1.200px 0 .8px; border: 1px solid #555; }
.textarea s { font: 6px/6px "Liberation Mono", monospace; text-decoration: none; }
.optrow { display: flex; align-items: center; height: 31px; }
.check { box-sizing: border-box; width: 13px; height: 13px; margin-left: 109px; border: 1px solid #555; border-radius: 3px; background: #fdfdfd; }
.check.second { margin-left: 16px; }
.check.on { margin-left: 7px; background: #0a63b8; border-color: #0a63b8; }
.check.on svg { width: 11px; height: 11px; fill: none; stroke: #fff; stroke-width: 1.2; }
.cap { margin-left: 6px; }
.arr { width: 22px; height: 12px; }
.l1 { margin: 0 10px 0 12px; }
.l2 { margin: 0 10px 0 24.500px; }
.r1 { margin-left: 9px; }
.field { box-sizing: border-box; width: 134px; height: 28px; padding: 5px 0 5px 4px; border: 1px solid #0a820a; background: #fff; overflow: hidden; font-style: italic; color: #777; }
.field.one { margin-left: 21px; }
.field.two { margin-left: 6px; }
.r3 { margin-left: 13px; }
.dash { height: 26px; margin: -2px 4px 0 7px; border-left: 1px dashed #777; }

.devbar { display: flex; align-items: center; gap: 6.600px; height: 22px; padding-left: 3px; background: #f6f6f6; border-bottom: 1px solid #bdbdbd; color: #000; }
.devbar div { display: flex; align-items: center; }
.devbar i { border: 4px solid transparent; border-top: 5px solid #444; border-bottom: 0; }
.devbar div { column-gap: .15px; }

.banner { height: 45px; background: #438eb9; }
.blank { width: 361px; height: 41px; margin-left: 10px; background: #fff; }

.body { display: flex; font-family: "Liberation Sans", "Noto Sans CJK SC", sans-serif; }
.sidebar { flex: none; width: 189px; height: 1035px; background: #f2f2f2; border-right: 1px solid #ccc; font-size: 13px; color: #585858; }
.item { display: flex; align-items: center; box-sizing: border-box; height: 40px; padding: 0 12px 2px 7px; border-top: 1px solid #e2e2e2; background: #f8f8f8; }
.item span { margin-left: 4px; }
.item .nudge { margin-left: 5px; }
.gl { width: 13px; height: 13px; fill: currentColor; }
.chev { width: 10px; height: 6px; margin: 3px 0 0 auto; fill: none; stroke: currentColor; stroke-width: 1.6; }
.item.active { position: relative; background: #fff; color: #2b7dbc; font-weight: bold; }
.item.active::after { content: ""; position: absolute; right: -2px; top: -1px; width: 2px; height: 150px; background: #2b7dbc; }
.subs { position: relative; border-top: 1px solid #e2e2e2; background: #fff; }
.subs::before { content: ""; position: absolute; z-index: 1; left: 18px; top: 0; bottom: 0; border-left: 1px dotted #7fa4c4; }
.sub { position: relative; display: flex; align-items: center; box-sizing: border-box; height: 36.400px; padding: 0 0 2px 20px; border-top: 1px dotted #dcdcdc; }
.sub:first-child { border-top: 0; }
.sub span { margin-left: 10px; }
.mark { width: 7px; border-top: 1px dotted #7fa4c4; }
.current { background: #f3f6fa; color: #2b7dbc; }
.current .mark { z-index: 2; box-sizing: border-box; margin-left: -3px; margin-right: 3px; width: 7px; height: 14px; background: #f3f6fa; border: solid transparent; border-width: 0; }
.current .mark::before { content: ""; display: block; margin-top: 3px; border: 4px solid transparent; border-left-color: #c86139; border-right: 0; width: 0; }
.current::after { content: ""; position: absolute; right: 0; top: 2px; border: 14px solid transparent; border-right: 8px solid #2b7dbc; border-left: 0; }
.collapse { display: flex; align-items: center; justify-content: center; height: 26px; border-top: 1px solid #e2e2e2; border-bottom: 1px solid #e2e2e2; background: #f2f2f2; }
.collapse i { width: 70px; height: 1px; background: #dcdcdc; }
.collapse div { display: flex; align-items: center; justify-content: center; width: 18px; height: 18px; border: 1px solid #bbb; border-radius: 50%; background: #fff; }
.collapse svg { width: 8px; height: 8px; fill: none; stroke: #999; }

.content { flex: 1; color: #000; }
.box { display: flex; justify-content: space-between; box-sizing: border-box; width: 600px; margin-left: 877px; border: 1px solid #000; }
.head { height: 69px; background: #99c; }
.head h1 { margin: 19px 0 0; font-size: 14.600px; line-height: 18px; font-weight: normal; }
.head svg { width: 120px; height: 63px; margin-top: 2px; }
.head text { font: italic bold 45px "Liberation Sans", sans-serif; fill: #231f20; stroke: #fff; stroke-width: 2.4px; paint-order: stroke; }
.table { box-sizing: border-box; width: 600px; margin: 20px 0 0 877px; border: 1px solid #000; border-top: 0; font-size: 9.750px; line-height: 14.625px; }
.tr { display: flex; border-top: 1px solid #000; background: #ccc; }
.th { flex: none; width: 88px; background: #ccf; border-right: 1px solid #000; font-weight: bold; }
.th div, .td div { height: 14.625px; }
.td { padding-left: .5px; }
.zend { height: 74px; margin-top: 20.500px; background: #ccc; font-size: 9.750px; line-height: 14.625px; }
.lines div { height: 14.625px; }
.lines .in { padding-left: 12px; }
.zend svg { width: 115px; height: 72px; }
.by { font: 10px "Liberation Sans", sans-serif; fill: #000; }
.cog { fill: #1f5b93; stroke: #0b1420; stroke-width: 1.2; }
.ze { font: 16.500px "DejaVu Sans", sans-serif; fill: #fff; stroke: #fff; stroke-width: .4px; filter: drop-shadow(1px 1px 0 #000); }
.two { fill: #ff6a00; stroke: #ff6a00; stroke-width: .8; }
.two.shade { fill: #3a3a3a; stroke: #3a3a3a; }
.after { width: 600px; margin: 39px 0 0 782px; text-align: center; }
.after hr { height: 1px; margin: 0; border: 0; background: #ccc; }
.after h2 { height: 61px; margin: 0; font-size: 19.500px; line-height: 61px; font-weight: normal; }
.after .credits { color: #009; }
.after a { display: block; margin-top: -1px; font-size: 16px; line-height: 18px; color: #337ab7; }
</style>
